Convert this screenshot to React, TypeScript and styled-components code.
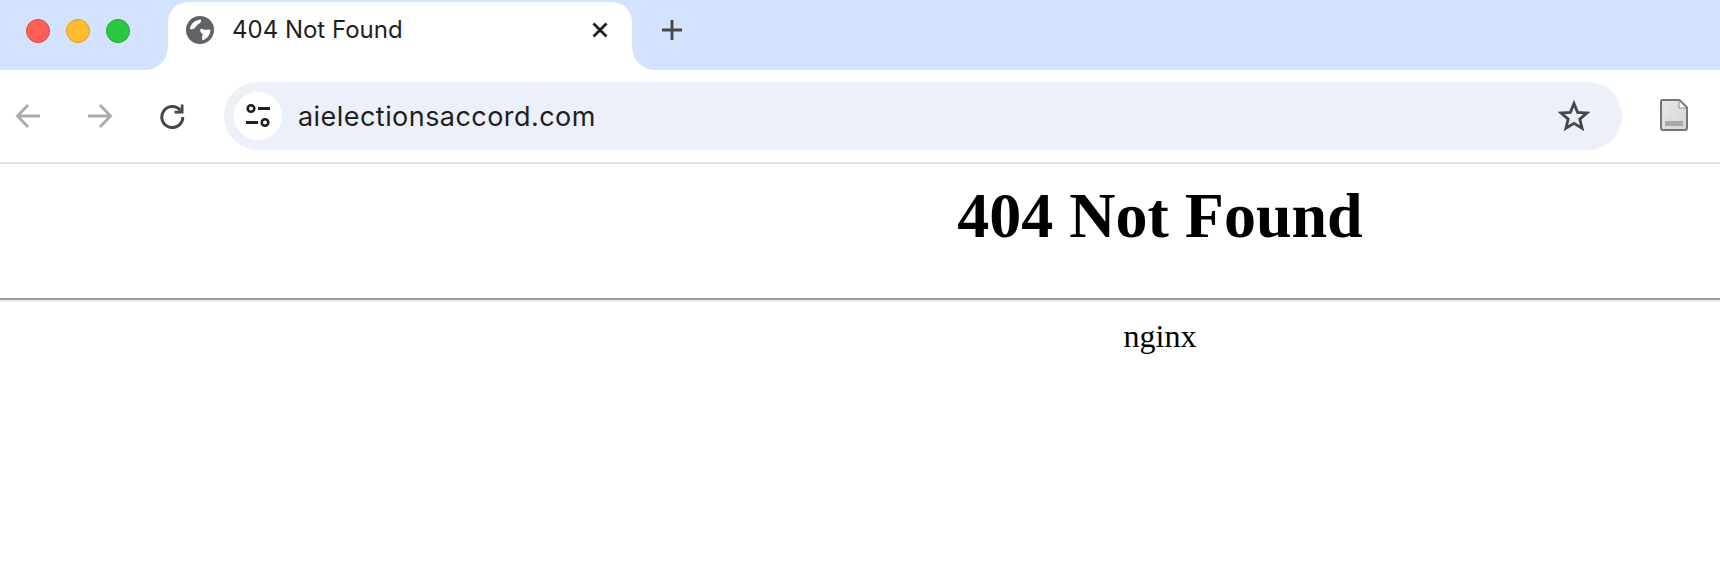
import React from "react";
import styled, { createGlobalStyle } from "styled-components";

const Global = createGlobalStyle`
  html, body { margin: 0; padding: 0; background: #fff; }
  body { width: 1720px; height: 568px; overflow: hidden; }
`;

const Window = styled.div`
  width: 1720px;
  height: 568px;
  display: flex;
  flex-direction: column;
  background: #fff;
`;

const TabStrip = styled.div`
  display: flex;
  height: 70px;
  background: #fff;
`;

const StripLeft = styled.div`
  width: 168px;
  background: #d3e3fd;
  border-bottom-right-radius: 23px;
  display: flex;
  align-items: flex-start;
  gap: 16px;
  padding: 19px 0 0 26px;
  box-sizing: border-box;
`;

const Light = styled.span<{ $fill: string; $edge: string }>`
  width: 24px;
  height: 24px;
  border-radius: 50%;
  box-sizing: border-box;
  background: ${(p) => p.$fill};
  border: 1px solid ${(p) => p.$edge};
`;

const TabSlot = styled.div`
  width: 464px;
  background: #d3e3fd;
  padding-top: 2px;
  box-sizing: border-box;
  display: flex;
`;

const Tab = styled.div`
  flex: 1;
  background: #fff;
  border-radius: 20px 20px 0 0;
  display: flex;
  align-items: flex-start;
  padding: 14px 0 0 18px;
  box-sizing: border-box;
`;

const TabTitle = styled.span`
  font: 400 24px/28px Inter, sans-serif;
  color: #1f1f1f;
  margin-left: 18px;
  width: 360px;
`;

const CloseWrap = styled.span`
  display: flex;
  margin-top: 6px;
`;

const StripRight = styled.div`
  flex: 1;
  background: #d3e3fd;
  border-bottom-left-radius: 23px;
  padding: 20px 0 0 30px;
  box-sizing: border-box;
`;

const Toolbar = styled.div`
  height: 92px;
  display: flex;
  align-items: flex-start;
  border-bottom: 2px solid #e1e1e1;
  box-sizing: content-box;
  background: #fff;
`;

const NavIcons = styled.div`
  width: 224px;
  height: 92px;
  display: flex;
  align-items: flex-start;
  padding: 33px 0 0 15px;
  gap: 46px;
  box-sizing: border-box;
  flex: none;
`;

const AddressBar = styled.div`
  margin-top: 12px;
  width: 1398px;
  height: 68px;
  border-radius: 34px;
  background: #ebf0f9;
  display: flex;
  align-items: center;
  padding: 0 32px 0 10px;
  box-sizing: border-box;
`;

const SiteButton = styled.div`
  width: 48px;
  height: 48px;
  border-radius: 50%;
  background: #fff;
  display: flex;
  align-items: center;
  justify-content: center;
`;

const Url = styled.div`
  flex: 1;
  margin-left: 16px;
  padding-top: 1px;
  font: 400 27px/32px Inter, sans-serif;
  letter-spacing: 0.45px;
  color: #1f1f1f;
`;

const ExtSlot = styled.div`
  margin: 29px 0 0 38px;
  display: flex;
`;

const Page = styled.div`
  flex: 1;
  font-family: "Liberation Serif", "Times New Roman", serif;
  color: #000;
  background: #fff;
`;

const Centered = styled.div`
  padding-left: 600px;
  text-align: center;
`;

const Heading = styled.h1`
  margin: 0;
  padding-top: 22px;
  height: 112px;
  box-sizing: content-box;
  font: 700 64px/60px "Liberation Serif", serif;
  white-space: nowrap;
`;

const Rule = styled.hr`
  margin: 0;
  height: 2px;
  border: 0;
  background: #9b9b9b;
  box-shadow: 0 2px 0 #eeeeee;
`;

const Footer = styled.div`
  padding-top: 18px;
  font: 400 32px/36px "Liberation Serif", serif;
`;

const Globe = () => (
  <svg width="28" height="28" viewBox="0 0 28 28">
    <circle cx="14" cy="14" r="14" fill="#5f6368" />
    <path d="M4 13C4.500 8 9 4 15 3.600c.5 2.400-1 3.900-3 4.900-1.500 1-2 2.500-4 4-1.500 1-3 1-4 .5z" fill="#fff" />
    <path d="M24.400 13.500C24.400 19 21 23 16.500 24.300c-.5-1.800-1-4.300.5-5.800l-2-2c-1.500-1.500-1-3.500.5-4 1.500 1.500 4.500 1.500 8.900 1z" fill="#fff" />
  </svg>
);

const Close = () => (
  <svg width="16" height="16" viewBox="0 0 16 16">
    <path d="M1.500 1.500l13 13M14.500 1.500l-13 13" stroke="#1f1f1f" strokeWidth="2.800" fill="none" />
  </svg>
);

const Plus = () => (
  <svg width="20" height="20" viewBox="0 0 20 20" style={{ display: "block" }}>
    <path d="M10 0v20M0 10h20" stroke="#474747" strokeWidth="2.800" fill="none" />
  </svg>
);

const Arrow = ({ flip }: { flip?: boolean }) => (
  <svg width="26" height="26" viewBox="0 0 26 26" style={flip ? { transform: "scaleX(-1)" } : undefined}>
    <path d="M25 13H3M13 2L2.500 13 13 24" stroke="#ababab" strokeWidth="2.800" fill="none" />
  </svg>
);

const Reload = () => (
  <svg width="26" height="26" viewBox="0 0 26 26">
    <path d="M21.500 7.500A10.500 10.500 0 1 0 23.800 14" stroke="#474747" strokeWidth="3" fill="none" />
    <path d="M24.500 1.500v9h-9v-2.700h6.300V1.500z" fill="#474747" />
  </svg>
);

const Tune = () => (
  <svg width="26" height="26" viewBox="0 0 26 26">
    <circle cx="6" cy="5.500" r="3.300" fill="none" stroke="#1f1f1f" strokeWidth="2.600" />
    <path d="M13 5.500h12M1 19.500h12" stroke="#1f1f1f" strokeWidth="2.800" fill="none" />
    <circle cx="20" cy="19.500" r="3.300" fill="none" stroke="#1f1f1f" strokeWidth="2.600" />
  </svg>
);

const Star = () => (
  <svg width="32" height="32" viewBox="0 0 32 32">
    <path d="M16 3.500l3.600 8.800 9.400.7-7.200 6.100 2.300 9.200L16 23.300l-8.100 5 2.300-9.200L3 13l9.400-.7z" fill="none" stroke="#474747" strokeWidth="2.800" />
  </svg>
);

const PageIcon = () => (
  <svg width="28" height="32" viewBox="0 0 28 32">
    <defs>
      <linearGradient id="sheet" x1="0" y1="0" x2="1" y2="1">
        <stop offset="0" stopColor="#e9e9e9" />
        <stop offset="1" stopColor="#d4d4d4" />
      </linearGradient>
    </defs>
    <path d="M2.500 1h17L27 8.500V29a2 2 0 0 1-2 2H3a2 2 0 0 1-2-2V2.500A1.500 1.500 0 0 1 2.500 1z" fill="url(#sheet)" stroke="#757575" strokeWidth="2" />
    <path d="M19 1.500V9h7.500z" fill="#fff" stroke="#8a8a8a" strokeWidth="1" />
    <rect x="5" y="22" width="18" height="5" fill="#a9a9a9" />
  </svg>
);

export default function App() {
  return (
    <Window>
      <Global />
      <TabStrip>
        <StripLeft>
          <Light $fill="#ff5f57" $edge="#e0443e" />
          <Light $fill="#febc2e" $edge="#dea123" />
          <Light $fill="#28c840" $edge="#1aab29" />
        </StripLeft>
        <TabSlot>
          <Tab>
            <Globe />
            <TabTitle>404 Not Found</TabTitle>
            <CloseWrap>
              <Close />
            </CloseWrap>
          </Tab>
        </TabSlot>
        <StripRight>
          <Plus />
        </StripRight>
      </TabStrip>
      <Toolbar>
        <NavIcons>
          <Arrow />
          <Arrow flip />
          <Reload />
        </NavIcons>
        <AddressBar>
          <SiteButton>
            <Tune />
          </SiteButton>
          <Url>aielectionsaccord.com</Url>
          <Star />
        </AddressBar>
        <ExtSlot>
          <PageIcon />
        </ExtSlot>
      </Toolbar>
      <Page>
        <Centered>
          <Heading>404 Not Found</Heading>
        </Centered>
        <Rule />
        <Centered>
          <Footer>nginx</Footer>
        </Centered>
      </Page>
    </Window>
  );
}
